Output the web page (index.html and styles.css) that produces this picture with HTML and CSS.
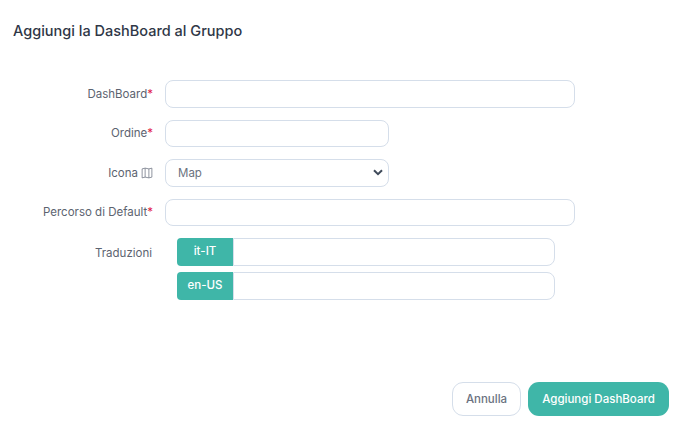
FILE: index.html
```html
<!DOCTYPE html>
<html lang="it">
<head>
<meta charset="utf-8">
<title>Aggiungi la DashBoard al Gruppo</title>
<link rel="stylesheet" href="styles.css">
</head>
<body>
<main class="dialog">
  <h1 class="title">Aggiungi la DashBoard al Gruppo</h1>
  <form class="form">
    <div class="row">
      <label class="label">DashBoard<span class="req">*</span></label>
      <div class="field"><input class="input wide" type="text"></div>
    </div>
    <div class="row">
      <label class="label">Ordine<span class="req">*</span></label>
      <div class="field"><input class="input narrow" type="text"></div>
    </div>
    <div class="row">
      <label class="label">Icona
        <svg class="map-icon" viewBox="0 0 16 16" width="12" height="12" fill="none" stroke="currentColor" stroke-width="1" aria-hidden="true"><path d="M1.5 2.5 5.5 1.5 10.5 2.5 14.5 1.5V13.5L10.5 14.5 5.5 13.5 1.5 14.5Z"/><path d="M5.5 1.5V13.5M10.5 2.5V14.5"/></svg>
      </label>
      <div class="field">
        <div class="select narrow">
          <span>Map</span>
          <svg class="chev" viewBox="0 0 10 7" width="10" height="7" fill="none" stroke="currentColor" stroke-width="2" aria-hidden="true"><path d="M1 1.2 5 5.2 9 1.2"/></svg>
        </div>
      </div>
    </div>
    <div class="row">
      <label class="label">Percorso di Default<span class="req">*</span></label>
      <div class="field"><input class="input wide" type="text"></div>
    </div>
    <div class="row row-top">
      <label class="label label-top">Traduzioni</label>
      <div class="field translations">
        <div class="group"><span class="addon">it-IT</span><input class="group-input" type="text"></div>
        <div class="group"><span class="addon">en-US</span><input class="group-input" type="text"></div>
      </div>
    </div>
  </form>
  <footer class="footer">
    <button class="btn btn-light" type="button">Annulla</button>
    <button class="btn btn-primary" type="button">Aggiungi DashBoard</button>
  </footer>
</main>
</body>
</html>
```
FILE: styles.css
```css
* { box-sizing: border-box; }
html, body { margin: 0; height: 100%; background: #fff; }
body { font-family: Inter, "Noto Sans", sans-serif; color: #6b7280; overflow: hidden; }
.dialog { height: 432px; display: flex; flex-direction: column; padding: 22px 14px 16px 13px; }
.title { margin: 0; font-size: 14.5px; line-height: 18px; font-weight: 500; color: #2f3747; }
.form { margin-top: 40px; display: flex; flex-direction: column; gap: 12px; }
.row { display: grid; grid-template-columns: 140px 1fr; column-gap: 12px; align-items: center; }
.row-top { align-items: start; margin-top: 0; }
.label { text-align: right; font-size: 11.5px; color: #5c6370; display: flex; justify-content: flex-end; align-items: center; gap: 3px; }
.label-top { padding-top: 8px; justify-content: flex-end; padding-right: 1px; }
.req { color: #e11d48; margin-left: -3px; }
.map-icon { color: #6b7280; }
.input, .select { height: 27.5px; border: 1px solid #d5deea; border-radius: 8px; background: #fff; display: block; }
.wide { width: 410px; }
.narrow { width: 224px; }
.select { display: flex; align-items: center; justify-content: space-between; padding: 0 5px 0 12px; font-size: 11.5px; color: #6b7280; }
.chev { color: #3f4a5a; }
.translations { display: flex; flex-direction: column; gap: 6px; padding-left: 12px; }
.group { display: flex; width: 378px; height: 28px; }
.addon { width: 56px; background: #3fb6a8; color: #fff; font-size: 11.5px; font-weight: 500; border-radius: 4px 0 0 4px; display: flex; align-items: center; justify-content: center; padding-bottom: 2px; }
.group-input { flex: 1; min-width: 0; border: 1px solid #d5deea; border-radius: 0 8px 8px 0; background: #fff; }
.footer { margin-top: auto; display: flex; justify-content: flex-end; gap: 7px; }
.btn { height: 34px; border-radius: 11px; font-family: inherit; font-size: 11.5px; font-weight: 500; padding: 0; }
.btn-light { width: 69px; background: #fff; border: 1px solid #d5deea; color: #6b7280; }
.btn-primary { width: 141px; background: #3fb6a8; border: 0; color: #fff; }
```
